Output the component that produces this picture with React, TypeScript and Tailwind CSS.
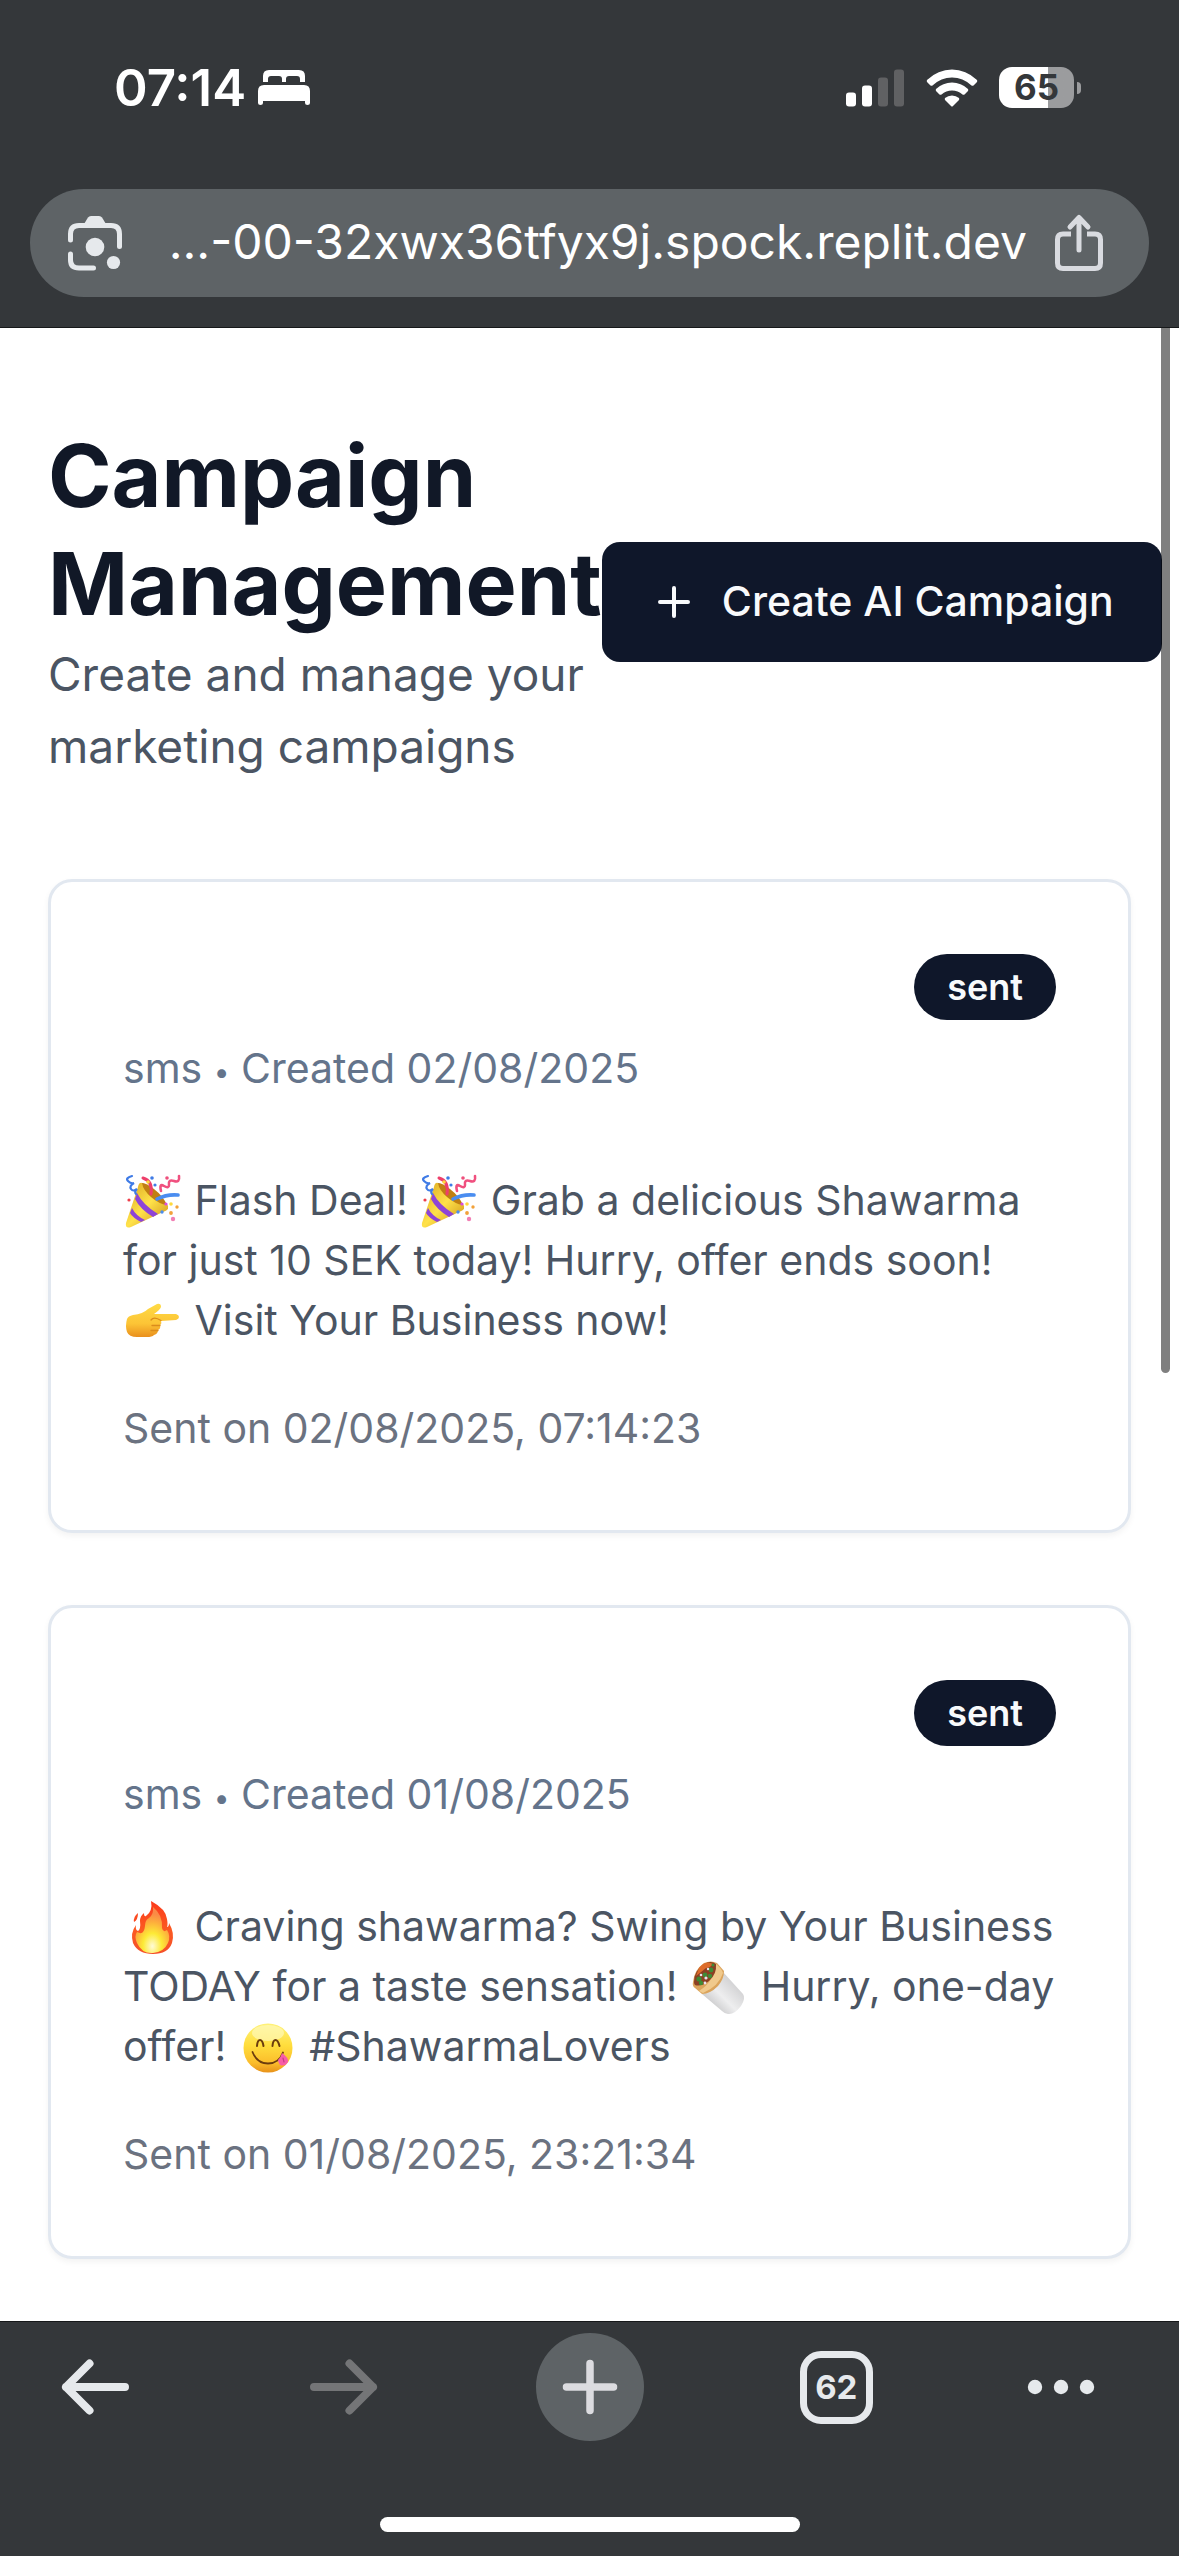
import React from "react";

type EmojiName = "party" | "point" | "fire" | "burrito" | "yum";

function EmojiArt({ name }: { name: EmojiName }) {
  switch (name) {
    case "party":
      return (
        <>
          <defs>
            <linearGradient id="cone" x1="0" y1="0" x2="1" y2="1">
              <stop offset="0" stopColor="#d9a31c" />
              <stop offset=".5" stopColor="#ffe24a" />
              <stop offset="1" stopColor="#c98a10" />
            </linearGradient>
          </defs>
          <path d="M17 9 42 30Q46 35 38 38L6 53Q0 55 1 49L13 13Q14 8 17 9Z" fill="url(#cone)" />
          <path d="M17 9Q20 8 29 15T42 31Q34 30 26 23T17 9Z" fill="#c07f12" />
          <path d="M12 19Q18 31 33 40L28 43Q15 35 10 25ZM7 34Q11 42 20 46L16 48Q8 44 5 39Z" fill="#8e44d6" />
          <g fill="none" strokeLinecap="round" strokeWidth="3">
            <path d="M18 4Q28 7 26 20" stroke="#ee3f6b" />
            <path d="M32 25Q42 20 53 21" stroke="#4a8df0" strokeWidth="3.6" />
            <path d="M7 2Q0 4 3 7T9 9Q4 12 6 15T12 15Q9 18 11 20" stroke="#3f7be6" strokeWidth="2.2" />
            <path d="M54 2Q55 9 49 7T44 11Q44 15 39 12T36 17" stroke="#f0507f" strokeWidth="2.6" />
          </g>
          <g>
            <circle cx="27" cy="4" r="1.8" fill="#3f7be6" />
            <circle cx="30" cy="11" r="1.6" fill="#3f7be6" />
            <circle cx="42" cy="4" r="1.8" fill="#ee4f7c" />
            <circle cx="23" cy="8" r="1.8" fill="#ffd93b" />
            <circle cx="4" cy="26" r="1.6" fill="#ee3f4b" />
            <circle cx="46" cy="30" r="1.8" fill="#ffd93b" />
            <circle cx="52" cy="33" r="1.7" fill="#f2a13a" />
            <circle cx="37" cy="38" r="1.7" fill="#4a8df0" />
            <circle cx="46" cy="39" r="1.9" fill="#f2a13a" />
            <circle cx="48" cy="45" r="2.2" fill="#f17fb4" />
            <circle cx="41" cy="30" r="1.6" fill="#d84be0" />
          </g>
        </>
      );
    case "point":
      return (
        <>
          <defs>
            <linearGradient id="hand" x1="0" y1="0" x2="0" y2="1">
              <stop offset="0" stopColor="#ffdb45" />
              <stop offset=".6" stopColor="#fcc436" />
              <stop offset="1" stopColor="#e98f1d" />
            </linearGradient>
          </defs>
          <path
            d="M2 25Q3 22 8 21Q18 20 23 15L32 10Q36 9 36 13Q35 16 29 20L51 20Q54 21 54 23T51 26L36 27Q37 30 35 31Q36 35 33 36Q33 40 29 41Q27 43 22 43L12 43Q4 43 2 38Q0 32 2 25Z"
            fill="url(#hand)"
          />
          <path d="M26 26Q29 22 36 26.5M27 31.5H35M26 36.5H33" fill="none" stroke="#db8c1c" strokeWidth="1.3" strokeLinecap="round" />
        </>
      );
    case "fire":
      return (
        <>
          <defs>
            <linearGradient id="flame" x1="0" y1="0" x2="0" y2="1">
              <stop offset="0" stopColor="#fb3a1b" />
              <stop offset=".55" stopColor="#fb5a22" />
              <stop offset="1" stopColor="#f4502a" />
            </linearGradient>
            <radialGradient id="core" cx=".5" cy=".85" r=".7">
              <stop offset="0" stopColor="#fffbd8" />
              <stop offset=".4" stopColor="#fdea36" />
              <stop offset=".75" stopColor="#fdae3c" />
              <stop offset="1" stopColor="#fb8a46" />
            </radialGradient>
          </defs>
          <path
            d="M26 1Q41 9 42 19Q43 25 42 27Q44 27 44 23Q50 33 47 43Q43 54 28 54T8 43Q5 33 11 25Q10 30 13 31Q16 29 15 21Q15 16 19 13Q19 17 21 16Q28 11 26 1Z"
            fill="url(#flame)"
          />
          <path
            d="M28 7Q38 15 37 28Q38 33 42 30Q46 36 43 43Q39 52 28 53T12 43Q9 36 12 32Q19 36 20 26Q20 20 24 18Q29 14 28 7Z"
            fill="url(#core)"
          />
          <path d="M13 13Q8 17 9 22Q13 20 13 13Z" fill="#fb4a20" />
        </>
      );
    case "burrito":
      return (
        <>
          <defs>
            <linearGradient id="foil" x1="0" y1="1" x2="1" y2="0">
              <stop offset="0" stopColor="#aaaaac" />
              <stop offset=".45" stopColor="#eeeeef" />
              <stop offset="1" stopColor="#bcbcbe" />
            </linearGradient>
          </defs>
          <path d="M11 34Q22 27 32 12L52 34Q55 38 50 46Q43 55 37 54Q34 54 31 51Z" fill="url(#foil)" />
          <path d="M2 22Q3 10 13 3Q20 0 26 3L33 11Q33 19 27 26Q19 34 11 34L4 28Q1 26 2 22Z" fill="#dba45c" />
          <path d="M24 3Q31 9 32 13Q28 26 12 33L8 31Q24 21 24 3Z" fill="#f0c98c" />
          <path d="M3 22Q3 11 13 4Q20 0 25 4Q26 14 18 21Q10 27 4 25Q3 24 3 22Z" fill="#8c4023" />
          <path d="M8 8Q14 0 22 4Q19 8 15 8Q9 13 5 16Z" fill="#dd6c2b" />
          <g fill="#3f8b35">
            <circle cx="8" cy="19" r="2.6" />
            <circle cx="14" cy="15" r="2.4" />
            <circle cx="20" cy="10" r="2.4" />
            <circle cx="19" cy="16" r="2.2" />
            <circle cx="10" cy="23" r="2.2" />
            <circle cx="22" cy="5" r="1.5" />
          </g>
          <g fill="#e9e4ef">
            <circle cx="15" cy="18" r="1.6" />
            <circle cx="10" cy="15" r="1.3" />
            <circle cx="17" cy="9" r="1.2" />
            <circle cx="14" cy="23" r="1.4" />
          </g>
        </>
      );
    case "yum":
      return (
        <>
          <defs>
            <linearGradient id="face" x1="0" y1="0" x2="0" y2="1">
              <stop offset="0" stopColor="#fff27a" />
              <stop offset=".45" stopColor="#ffdd3c" />
              <stop offset=".8" stopColor="#fbbd2b" />
              <stop offset="1" stopColor="#e8921a" />
            </linearGradient>
          </defs>
          <circle cx="28" cy="28" r="24.5" fill="url(#face)" />
          <ellipse cx="28" cy="13" rx="16" ry="8" fill="#fffbc8" opacity=".6" />
          <g fill="none" strokeLinecap="round" stroke="#6b3c0e">
            <path d="M17 26Q17.500 20 20 20T23.500 26M32.500 26Q33 20 35.500 20T39.500 26" strokeWidth="2" />
            <path d="M12.500 32Q17 43.500 28 43.500T43 32.500" strokeWidth="1.800" />
          </g>
          <path d="M42 33Q49 38 48 42Q45 47 40 45Q38 42 38 40Q41 37 42 33Z" fill="#f75da8" />
          <path d="M43 38L44 42" stroke="#c93d84" strokeWidth="1.2" strokeLinecap="round" />
        </>
      );
  }
}

function Emoji({ name, label }: { name: EmojiName; label: string }) {
  return (
    <svg role="img" aria-label={label} viewBox="-2 0 60 60" className="-my-3 inline-block size-[60px] align-middle">
      <EmojiArt name={name} />
    </svg>
  );
}

function StatusBar() {
  return (
    <div className="flex h-[175px] items-center justify-between pr-[98px] pl-[114px] text-white">
      <div className="flex items-center gap-3">
        <time className="text-[51px] leading-none font-semibold">07:14</time>
        <svg role="img" aria-label="Sleep focus" viewBox="0 0 52 36" className="h-9 w-[52px]" fill="#fff">
          <path d="M5 12V6Q5 0 11 0H41Q47 0 47 6V12H42V9Q42 6 39 6H31Q28 6 28 9V12H24V9Q24 6 21 6H13Q10 6 10 9V12Z" />
          <path d="M0 21Q0 15 6 15H46Q52 15 52 21V33Q52 35 49.500 35T47 33V31H5V33Q5 35 2.500 35T0 33Z" />
        </svg>
      </div>
      <div className="flex items-center">
        <svg role="img" aria-label="Signal strength" viewBox="0 0 58 38" className="mr-[22px] h-[38px] w-[58px]" fill="#fff">
          <rect x="0" y="23.500" width="10" height="14" rx="3" />
          <rect x="16" y="16.500" width="10" height="21" rx="3" />
          <rect x="32" y="8.500" width="10" height="29" rx="3" fill="#606163" />
          <rect x="48" y="0.500" width="10" height="37" rx="3" fill="#606163" />
        </svg>
        <svg role="img" aria-label="Wi-Fi" viewBox="0 0 52 38" className="mr-[21px] h-[38px] w-[52px]" fill="#fff">
          <path d="M1 11Q12 0.500 26 0.500T51 11Q51.500 12 51 13L47.500 16.500Q46.500 17 45.500 16.500Q37 8.500 26 8.500T6.500 16.500Q5.500 17 4.500 16.500L1 13Q0.500 12 1 11Z" />
          <path d="M10 20Q17 13.500 26 13.500T42 20Q42.500 21 42 22L38.500 25.500Q37.500 26 36.500 25.500Q32 21.500 26 21.500T15.500 25.500Q14.500 26 13.500 25.500L10 22Q9.500 21 10 20Z" />
          <path d="M19 29Q22 26.500 26 26.500T33 29Q33.500 30 33 31L27 37Q26 38 25 37L19 31Q18.500 30 19 29Z" />
        </svg>
        <div className="flex items-center gap-[3px]">
          <div className="flex h-[41px] w-[75px] items-center justify-center rounded-[13px] bg-linear-to-r from-white from-65% to-[#9b9c9e] to-65% text-[35px] leading-none font-bold text-[#34373a]">
            65
          </div>
          <span className="h-3 w-1 rounded-r-full bg-[#9b9c9e]" />
        </div>
      </div>
    </div>
  );
}

function AddressBar() {
  return (
    <div className="px-[30px] pt-[14px] pb-[30px]">
      <div className="flex h-[108px] items-center rounded-full bg-[#5e6366] pr-11 pl-9">
        <button type="button" aria-label="Search with camera">
          <svg viewBox="0 0 58 58" className="size-[58px]" fill="none" stroke="#e6e9ec" strokeWidth="5" strokeLinecap="round">
            <path d="M4.500 26V20Q4.500 11.500 13 11.500H45Q53.500 11.500 53.500 20V32.500M4.500 40V46Q4.500 54 13 54H27.500" />
            <path d="M18 10 22 3.500Q23 2 25 2H33Q35 2 36 3.500L40 10Z" fill="#e6e9ec" stroke="none" />
            <circle cx="29" cy="33" r="9.300" fill="#e6e9ec" stroke="none" />
            <circle cx="47.500" cy="48.500" r="6.600" fill="#e6e9ec" stroke="none" />
          </svg>
        </button>
        <input
          type="text"
          aria-label="Address"
          readOnly
          value="...-00-32xwx36tfyx9j.spock.replit.dev"
          className="h-full min-w-0 flex-1 bg-transparent pr-[26px] pb-1 text-right text-[48px] text-white outline-none"
        />
        <button type="button" aria-label="Share">
          <svg viewBox="0 0 52 60" className="h-[60px] w-[52px]" fill="none" stroke="#d9dbe0" strokeWidth="5" strokeLinecap="round" strokeLinejoin="round">
            <path d="M18 21H10Q4.500 21 4.500 26.500V50Q4.500 55.500 10 55.500H42Q47.500 55.500 47.500 50V26.500Q47.500 21 42 21H34" strokeLinecap="butt" />
            <path d="M26 37V5M17 14 26 4.500 35 14" />
          </svg>
        </button>
      </div>
    </div>
  );
}

interface CardProps {
  created: string;
  sent: string;
  children: React.ReactNode;
}

function CampaignCard({ created, sent, children }: CardProps) {
  return (
    <article className="rounded-3xl border-3 border-[#e2e8f0] bg-white p-[72px] text-[41px] leading-[60px] shadow-[0_3px_6px_rgba(0,0,0,0.05)]">
      <header className="flex flex-col gap-[18px]">
        <div className="flex justify-end">
          <span className="flex h-[66px] items-center rounded-full bg-[#0f172a] px-[33px] text-[36px] leading-none font-semibold text-slate-50">
            sent
          </span>
        </div>
        <p className="text-[#64748b]">
          sms <span className="align-middle text-[28px] leading-none">•</span> Created {created}
        </p>
      </header>
      <p className="mt-[72px] text-[#4b5563]">{children}</p>
      <p className="mt-12 text-[#6b7280]">Sent on {sent}</p>
    </article>
  );
}

function NavButton({ label, disabled, children }: { label: string; disabled?: boolean; children: React.ReactNode }) {
  return (
    <button type="button" aria-label={label} disabled={disabled} className="flex w-[120px] items-center justify-center">
      {children}
    </button>
  );
}

function BottomBar() {
  return (
    <footer className="border-t border-[#16181a] bg-[#34373a]">
      <nav aria-label="Browser" className="flex items-center justify-between px-9 pt-[11px]">
        <NavButton label="Back">
          <svg viewBox="0 0 76 60" className="h-[60px] w-[76px]" fill="none" stroke="#e6e9ec" strokeWidth="8" strokeLinecap="round" strokeLinejoin="round">
            <path d="M67 30H8M31.500 6.500 8 30 31.500 53.500" />
          </svg>
        </NavButton>
        <NavButton label="Forward" disabled>
          <svg viewBox="0 0 76 60" className="h-[60px] w-[76px]" fill="none" stroke="#747577" strokeWidth="8" strokeLinecap="round" strokeLinejoin="round">
            <path d="M9 30H68M44.500 6.500 68 30 44.500 53.500" />
          </svg>
        </NavButton>
        <NavButton label="New tab">
          <span className="flex size-[108px] items-center justify-center rounded-full bg-[#5e6366]">
            <svg viewBox="0 0 56 56" className="size-14" stroke="#dcdce0" strokeWidth="7.500" strokeLinecap="round">
              <path d="M28 4.500V51.500M4.500 28H51.500" />
            </svg>
          </span>
        </NavButton>
        <NavButton label="62 open tabs">
          <span className="flex size-[73px] items-center justify-center rounded-[21px] border-7 border-[#e6e9ec] text-[33px] leading-none font-bold text-[#e6e9ec]">
            62
          </span>
        </NavButton>
        <NavButton label="More">
          <svg viewBox="0 0 120 60" className="h-[60px] w-[120px]" fill="#e6e9ec">
            <circle cx="12" cy="30" r="7.200" />
            <circle cx="38" cy="30" r="7.200" />
            <circle cx="64" cy="30" r="7.200" />
          </svg>
        </NavButton>
      </nav>
      <div className="flex justify-center pt-[76px] pb-6">
        <span className="h-[15px] w-[420px] rounded-full bg-white" />
      </div>
    </footer>
  );
}

export default function App() {
  return (
    <div className="flex min-h-screen flex-col bg-[#34373a] font-['Inter','Noto_Sans',sans-serif]">
      <div className="border-b border-[#16181a]">
        <StatusBar />
        <AddressBar />
      </div>
      <main className="relative flex-1 overflow-hidden bg-white px-12 pt-[94px] pb-[62px]">
        <div className="mb-[97px] flex items-center justify-between">
          <div>
            <h1 className="text-[86px] leading-[108px] font-bold text-[#111827]">Campaign Management</h1>
            <p className="text-[46px] leading-[72px] text-[#4b5563]">Create and manage your marketing campaigns</p>
          </div>
          <button type="button" className="flex h-[120px] shrink-0 items-center gap-6 rounded-[18px] bg-[#0f172a] px-12 text-[41px] font-medium whitespace-nowrap text-slate-50">
            <svg viewBox="0 0 24 24" className="size-12" fill="none" stroke="currentColor" strokeWidth="2" strokeLinecap="round" aria-hidden="true">
              <path d="M5 12H19M12 5V19" />
            </svg>
            Create AI Campaign
          </button>
        </div>
        <section aria-label="Campaigns" className="flex flex-col gap-[72px]">
          <CampaignCard created="02/08/2025" sent="02/08/2025, 07:14:23">
            <Emoji name="party" label="🎉" /> Flash Deal! <Emoji name="party" label="🎉" /> Grab a delicious Shawarma for just 10 SEK
            today! Hurry, offer ends soon! <Emoji name="point" label="👉" /> Visit Your Business now!
          </CampaignCard>
          <CampaignCard created="01/08/2025" sent="01/08/2025, 23:21:34">
            <Emoji name="fire" label="🔥" /> Craving shawarma? Swing by Your Business TODAY for a taste sensation!{" "}
            <Emoji name="burrito" label="🌯" /> Hurry, one-day offer! <Emoji name="yum" label="😋" /> #ShawarmaLovers
          </CampaignCard>
        </section>
        <div aria-hidden="true" className="absolute top-0 right-[9px] h-[1045px] w-[9px] rounded-b-full bg-black/50" />
      </main>
      <BottomBar />
    </div>
  );
}
